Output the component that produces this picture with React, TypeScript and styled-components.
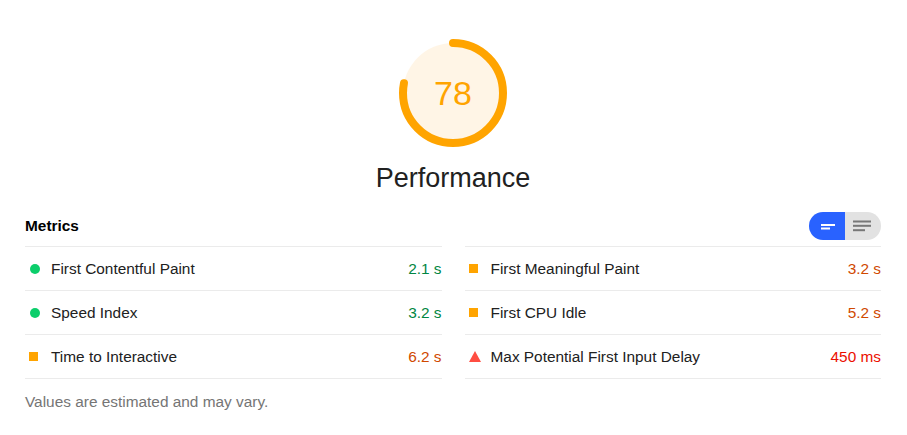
import React from 'react'
import styled, { createGlobalStyle, css } from 'styled-components'

type Status = 'pass' | 'average' | 'fail'

const colors = {
  pass: '#0cce6b',
  passText: '#018642',
  average: '#ffa400',
  averageText: '#d04900',
  fail: '#ff4e42',
  failText: '#eb0f00',
  text: '#212121',
  muted: '#757575',
  border: '#ebebeb',
}

const metrics: { title: string; value: string; status: Status }[] = [
  { title: 'First Contentful Paint', value: '2.1 s', status: 'pass' },
  { title: 'First Meaningful Paint', value: '3.2 s', status: 'average' },
  { title: 'Speed Index', value: '3.2 s', status: 'pass' },
  { title: 'First CPU Idle', value: '5.2 s', status: 'average' },
  { title: 'Time to Interactive', value: '6.2 s', status: 'average' },
  { title: 'Max Potential First Input Delay', value: '450 ms', status: 'fail' },
]

const GlobalStyle = createGlobalStyle`
  body {
    margin: 0;
    background: #fff;
    font-family: 'Liberation Sans', Arial, sans-serif;
    color: ${colors.text};
  }
`

const Page = styled.div`
  padding: 39px 26px 0 25px;
`

const GaugeWrapper = styled.div`
  display: flex;
  flex-direction: column;
  align-items: center;
`

const GaugeBox = styled.div`
  position: relative;
  width: 108px;
  height: 108px;
`

const GaugeSvg = styled.svg`
  display: block;
`

const GaugeScore = styled.div`
  position: absolute;
  inset: 0;
  display: flex;
  align-items: center;
  justify-content: center;
  font-size: 34px;
  color: ${colors.average};
`

const GaugeLabel = styled.div`
  margin-top: 15px;
  font-size: 27px;
  line-height: 32px;
  color: ${colors.text};
`

const Header = styled.div`
  display: flex;
  align-items: center;
  justify-content: space-between;
  height: 28px;
  margin: 18px 0 6px;
`

const HeaderTitle = styled.div`
  font-size: 15.4px;
  font-weight: 700;
  color: #000;
`

const Toggle = styled.div`
  display: flex;
  width: 72px;
  height: 28px;
  border-radius: 14px;
  overflow: hidden;
`

const ToggleHalf = styled.div<{ $active?: boolean }>`
  width: 36px;
  height: 28px;
  background: ${(p) => (p.$active ? '#2962ff' : '#e2e2e2')};
  svg {
    display: block;
  }
`

const Grid = styled.div`
  display: grid;
  grid-template-columns: 1fr 1fr;
  column-gap: 23px;
`

const Metric = styled.div`
  display: flex;
  align-items: center;
  height: 44px;
  box-sizing: border-box;
  border-bottom: 1px solid ${colors.border};
  font-size: 15.4px;

  &:nth-child(-n + 2) {
    height: 45px;
    border-top: 1px solid ${colors.border};
  }
`

const IconSlot = styled.div`
  width: 26px;
  display: flex;
  align-items: center;
`

const Icon = styled.span<{ $status: Status }>`
  display: block;
  ${(p) =>
    p.$status === 'pass' &&
    css`
      width: 10px;
      height: 10px;
      margin-left: 5px;
      border-radius: 50%;
      background: ${colors.pass};
    `}
  ${(p) =>
    p.$status === 'average' &&
    css`
      width: 9px;
      height: 9px;
      margin-left: 4px;
      background: ${colors.average};
    `}
  ${(p) =>
    p.$status === 'fail' &&
    css`
      width: 0;
      height: 0;
      margin-left: 4px;
      border-left: 6px solid transparent;
      border-right: 6px solid transparent;
      border-bottom: 11px solid ${colors.fail};
    `}
`

const MetricTitle = styled.div`
  flex: 1;
  color: ${colors.text};
`

const MetricValue = styled.div<{ $status: Status }>`
  color: ${(p) =>
    p.$status === 'pass'
      ? colors.passText
      : p.$status === 'average'
      ? colors.averageText
      : colors.failText};
`

const Footnote = styled.div`
  margin-top: 13px;
  font-size: 15.4px;
  line-height: 20px;
  color: ${colors.muted};
`

const Gauge: React.FC<{ score: number }> = ({ score }) => {
  const r = 50
  const circumference = 2 * Math.PI * r
  return (
    <GaugeBox>
      <GaugeSvg width="108" height="108" viewBox="0 0 108 108">
        <circle cx="54" cy="54" r={r} fill="#fff5e6" />
        <circle
          cx="54"
          cy="54"
          r={r}
          fill="none"
          stroke={colors.average}
          strokeWidth="8"
          strokeLinecap="round"
          strokeDasharray={`${(circumference * score) / 100} ${circumference}`}
          transform="rotate(-90 54 54)"
        />
      </GaugeSvg>
      <GaugeScore>{score}</GaugeScore>
    </GaugeBox>
  )
}

const App: React.FC = () => {
  return (
    <Page>
      <GlobalStyle />
      <GaugeWrapper>
        <Gauge score={78} />
        <GaugeLabel>Performance</GaugeLabel>
      </GaugeWrapper>

      <Header>
        <HeaderTitle>Metrics</HeaderTitle>
        <Toggle>
          <ToggleHalf $active>
            <svg width="36" height="28" viewBox="0 0 36 28">
              <rect x="12" y="12" width="14" height="2" fill="#fff" />
              <rect x="12" y="15.5" width="9" height="2" fill="#fff" />
            </svg>
          </ToggleHalf>
          <ToggleHalf>
            <svg width="36" height="28" viewBox="0 0 36 28">
              <rect x="8" y="8.5" width="18" height="2" fill="#777" />
              <rect x="8" y="12.8" width="18" height="2" fill="#777" />
              <rect x="8" y="17.2" width="12" height="2" fill="#777" />
            </svg>
          </ToggleHalf>
        </Toggle>
      </Header>

      <Grid>
        {metrics.map((m) => (
          <Metric key={m.title}>
            <IconSlot>
              <Icon $status={m.status} />
            </IconSlot>
            <MetricTitle>{m.title}</MetricTitle>
            <MetricValue $status={m.status}>{m.value}</MetricValue>
          </Metric>
        ))}
      </Grid>

      <Footnote>Values are estimated and may vary.</Footnote>
    </Page>
  )
}

export default App
